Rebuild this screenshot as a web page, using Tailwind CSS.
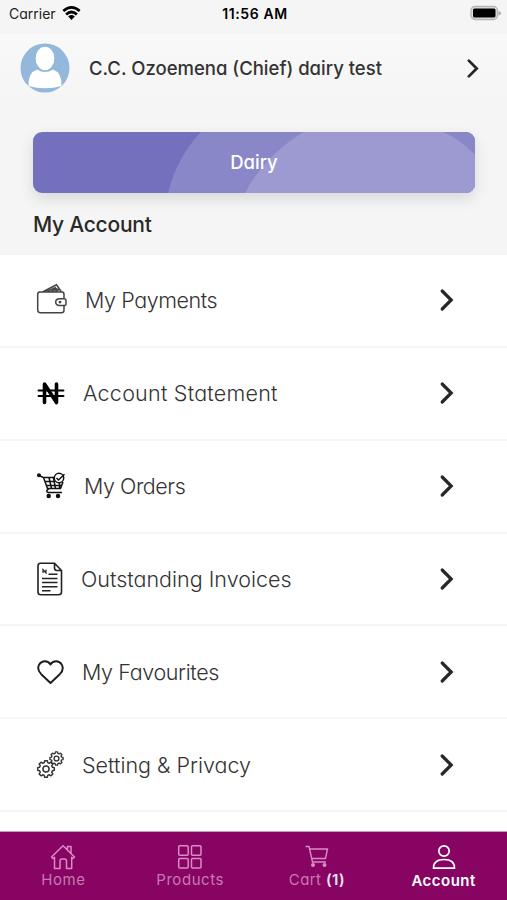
<!DOCTYPE html>
<html lang="en">
<head>
<meta charset="utf-8">
<title>My Account</title>
<script src="https://cdn.jsdelivr.net/npm/@tailwindcss/browser@4"></script>
</head>
<body class="w-[507px] h-[900px] overflow-hidden bg-white text-[#333] font-['Inter','Liberation_Sans',sans-serif] [font-feature-settings:'cv11']">
<svg class="hidden">
  <symbol id="chev" viewBox="0 0 16 24"><path d="M3.200 3 12.200 12 3.200 21" fill="none" stroke="#272727" stroke-width="3.200" stroke-linecap="round"/></symbol>
  <symbol id="gear" viewBox="-9 -9 18 18"><path d="M6.090-1.630 7.900-1.250V1.250L6.090 1.630 5.460 3.150 6.470 4.700 4.700 6.470 3.150 5.460 1.630 6.090 1.250 7.900H-1.250L-1.630 6.090-3.150 5.460-4.700 6.470-6.470 4.700-5.460 3.150-6.090 1.630-7.900 1.250V-1.250L-6.090-1.630-5.460-3.150-6.470-4.700-4.700-6.470-3.150-5.460-1.630-6.090-1.250-7.900H1.250L1.630-6.090 3.150-5.460 4.700-6.470 6.470-4.700 5.460-3.150Z"/><circle r="2.900"/></symbol>
</svg>
<div class="flex flex-col h-[900px]">
  <header class="h-[255px] shrink-0 bg-[#f5f5f5]">
    <div class="h-[34px] grid grid-cols-3 items-center pb-[8px] pl-[9px] pr-[6px] text-black">
      <div class="flex items-center gap-[6px] text-[14px] text-[#222]"><span>Carrier</span>
        <svg class="w-[19px] h-[15px]" viewBox="0 0 19 15"><g fill="none" stroke="#000" stroke-width="2.700"><path d="M1.300 5.100Q9.500-2.200 17.700 5.100"/><path d="M4.100 8.500Q9.500 3.500 14.900 8.500"/></g><path d="M6.200 10.500Q9.500 7.700 12.800 10.500L9.500 14Z"/></svg>
      </div>
      <div class="text-center text-[14px] font-semibold tracking-[0.6px] whitespace-nowrap">11:56 AM</div>
      <div class="flex justify-end"><svg class="w-[31px] h-[16px]" viewBox="0 0 31 16"><rect x="1" y="1.500" width="26.500" height="13" rx="4" fill="#e0e0e0" stroke="#b5b5b5" stroke-width="1.300"/><rect x="3" y="3.500" width="22.500" height="9" rx="1.500"/><path d="M28.500 6Q31 6.500 31 8.300T28.500 10.500Z" fill="#aaa"/></svg></div>
    </div>
    <div class="h-[68px] flex items-center bg-gradient-to-b from-[#f9f9f9] to-[#f5f5f5] pl-[20px] pr-[27px]">
      <svg class="size-[50px]" viewBox="0 0 50 50"><circle cx="25" cy="25" r="24.500" fill="#93b8dc"/><ellipse cx="25" cy="15.700" rx="9.200" ry="11.500" fill="#fff"/><path d="M15.500 20Q25 37 34.500 20L33 27Q25 31 17 27Z" fill="#93b8dc"/><ellipse cx="25" cy="15.200" rx="9.200" ry="11.500" fill="#fff"/><path d="M8.500 43Q8 29.500 17 26.500Q25 31.500 33 26.500Q42 29.500 41.500 43Q25 47.500 8.500 43Z" fill="#fff"/></svg>
      <h1 class="ml-[19px] mt-[2px] text-[18.500px] font-medium whitespace-nowrap flex-1">C.C. Ozoemena (Chief) dairy test</h1>
      <svg class="w-[14px] h-[21px]"><use href="#chev"/></svg>
    </div>
    <div class="pt-[30px] pl-[33px] pr-[32px]">
      <div class="relative h-[61px] w-[442px] rounded-[9px] overflow-hidden bg-[#7370be] shadow-[0_6px_14px_rgba(60,75,75,0.16)] flex items-center justify-center">
        <svg class="absolute inset-0 w-full h-full" viewBox="0 0 442 61"><path d="M135 61Q144 25 168 0H442V61Z" fill="#8987c7"/><path d="M212 61Q233 22 271 0H410Q427 7 442 23V61Z" fill="#9d9ad1"/></svg>
        <span class="relative text-[18.500px] font-medium text-white">Dairy</span>
      </div>
      <h2 class="mt-[16px] text-[21px] leading-[32px] font-medium tracking-[-0.25px] text-[#292929]">My Account</h2>
    </div>
  </header>
  <main class="flex-1 overflow-hidden text-[21.500px] font-[350]">
    <div class="h-[92.850px] flex items-center border-b-2 border-[#f5f5f5] pl-[36px] pr-[52px]">
      <svg class="w-[49px] h-[34px]" viewBox="0 0 49 34" fill="none" stroke="#444" stroke-width="1.500"><path d="M28 15.500V11.500Q28 9 26 9H4Q1.700 9 1.700 11.500V27Q1.700 29.700 4.500 29.700H25.500Q28 29.700 28 27.200V22.500M6.500 9 20.500 1.800 25.500 9M11 8.500 20 4.500M15 8.700 21.500 5.500M19 8.700 23 6.500"/><path d="M28 15.700H23.500Q19.700 15.700 19.700 19.100T23.500 22.500H28.500Q30 22.500 30 21V17.500Q30 15.700 28 15.700Z"/><circle cx="24" cy="19.100" r=".7"/></svg>
      <span class="flex-1 whitespace-nowrap tracking-[-0.42px]">My Payments</span><svg class="w-[16px] h-[24px]"><use href="#chev"/></svg>
    </div>
    <div class="h-[92.850px] flex items-center border-b-2 border-[#f5f5f5] pl-[36px] pr-[52px]">
      <svg class="w-[47px] h-[30px]" viewBox="0 0 47 30" fill="none" stroke="#000" stroke-linecap="round"><path d="M8.500 24.500V6L20.500 24.500V6" stroke-width="3.600" stroke-linejoin="round"/><path d="M2.500 12.500H27.500M2.500 18H27.500" stroke-width="1.900"/></svg>
      <span class="flex-1 whitespace-nowrap tracking-[0.24px]">Account Statement</span><svg class="w-[16px] h-[24px]"><use href="#chev"/></svg>
    </div>
    <div class="h-[92.850px] flex items-center border-b-2 border-[#f5f5f5] pl-[36px] pr-[52px]">
      <svg class="w-[48px] h-[30px]" viewBox="0 0 48 30" fill="none" stroke="#111" stroke-width="1.500"><path d="M3 4.500 7.500 6.500 11.500 17.500H24.500L27 11M7.500 6.500H18M9 10.500H19M10.500 14.500H26M13 6.500 15.500 17.500M17.500 7 19.500 17.500M23.500 12V17.500M13 17.500Q9 20 12 21.500H26"/><circle cx="23" cy="7" r="4.700"/><path d="m20.500 7 2 2 6-5.700"/><circle cx="3" cy="4.300" r="1.300" fill="#111"/><circle cx="12.700" cy="25" r="1.500" fill="#111"/><circle cx="22" cy="25" r="1.500" fill="#111"/></svg>
      <span class="flex-1 whitespace-nowrap tracking-[-0.45px]">My Orders</span><svg class="w-[16px] h-[24px]"><use href="#chev"/></svg>
    </div>
    <div class="h-[92.850px] flex items-center border-b-2 border-[#f5f5f5] pl-[36px] pr-[52px]">
      <svg class="w-[45px] h-[36px]" viewBox="0 0 45 36" fill="none" stroke="#222" stroke-width="1.600"><path d="M4.500 2.200H18.500L25.500 9.500V31Q25.500 33.800 22.500 33.800H5Q2 33.800 2 31V5Q2 2.200 4.500 2.200ZM18.500 2.200V7Q18.500 9.500 21 9.500H25.500"/><path d="M12.500 13.300H21.500M6 17.500H21.500M6 21.600H21.500M6 25.700H21.500M6 29.700H14.500" stroke-width="1.500"/><path d="M7 12V8.500L10 12V8.500" stroke-width="1.200"/></svg>
      <span class="flex-1 whitespace-nowrap">Outstanding Invoices</span><svg class="w-[16px] h-[24px]"><use href="#chev"/></svg>
    </div>
    <div class="h-[92.850px] flex items-center border-b-2 border-[#f5f5f5] pl-[36px] pr-[52px]">
      <svg class="w-[46px] h-[30px]" viewBox="0 0 46 30" fill="none" stroke="#1c1c1c" stroke-width="1.900" stroke-linejoin="round"><path d="M14.500 26 5.200 17.200Q.5 12.500 3.200 7.400C6 3.100 12 3.200 14.500 7.500C17 3.200 23 3.100 25.700 7.400Q28.500 12.500 23.800 17.200Z"/></svg>
      <span class="flex-1 whitespace-nowrap tracking-[-0.38px]">My Favourites</span><svg class="w-[16px] h-[24px]"><use href="#chev"/></svg>
    </div>
    <div class="h-[92.850px] flex items-center border-b-2 border-[#f5f5f5] pl-[36px] pr-[52px]">
      <svg class="w-[46px] h-[30px]" viewBox="0 0 46 30" fill="none" stroke="#333" stroke-width="1.400" stroke-linejoin="round"><use href="#gear" x="0.500" y="9.500" width="19" height="19"/><use href="#gear" x="13" y="1" width="15" height="15" stroke-width="1.600"/></svg>
      <span class="flex-1 whitespace-nowrap">Setting &amp; Privacy</span><svg class="w-[16px] h-[24px]"><use href="#chev"/></svg>
    </div>
  </main>
  <nav class="h-[69px] shrink-0 grid grid-cols-4 bg-[#870462] border-t border-[#c79bba] text-[15px] text-[#c879b1] leading-[18px]">
    <div class="flex flex-col items-center pt-[11px]">
      <svg class="w-[28px] h-[28px]" viewBox="0 0 28 28" fill="none" stroke="#d78dc4" stroke-width="1.500" stroke-linejoin="round"><path d="M2.500 14 14 2.700 25.500 14 24 15.500 22.700 14.300V25.500H17.500V18Q17.500 16 15.500 16H13Q11 16 11 18V25.500H5.500V14.300L4 15.500ZM18.500 6.500V3.500H22V10"/></svg><span class="tracking-[0.5px]">Home</span>
    </div>
    <div class="flex flex-col items-center pt-[11px]">
      <svg class="w-[28px] h-[28px]" viewBox="0 0 28 28" fill="none" stroke="#d78dc4" stroke-width="1.500"><rect x="2.700" y="2.700" width="9.500" height="9.500" rx="1"/><rect x="15.500" y="2.700" width="9.500" height="9.500" rx="1"/><rect x="2.700" y="15.500" width="9.500" height="9.500" rx="1"/><rect x="15.500" y="15.500" width="9.500" height="9.500" rx="1"/></svg><span class="tracking-[0.55px]">Products</span>
    </div>
    <div class="flex flex-col items-center pt-[11px]">
      <svg class="w-[28px] h-[28px]" viewBox="0 0 28 28" fill="none" stroke="#d78dc4" stroke-width="1.400"><path d="M2.500 3.500H6L9.500 19H23M7 6H24.500L22.500 15.500H8.500"/><circle cx="10" cy="22" r="1.300" fill="#d78dc4"/><circle cx="21.500" cy="22" r="1.300" fill="#d78dc4"/></svg><span class="tracking-[0.4px]">Cart <b class="font-semibold text-[#fbe7f5]">(1)</b></span>
    </div>
    <div class="flex flex-col items-center pt-[11px]">
      <svg class="w-[28px] h-[28px]" viewBox="0 0 28 28" fill="none" stroke="#fff" stroke-width="1.700" stroke-linejoin="round"><circle cx="14" cy="8" r="5.200"/><path d="M3.500 25.200Q3.500 16.500 14 16.500T24.500 25.200Z"/></svg><b class="font-semibold text-white mt-[1px] tracking-[0.5px]">Account</b>
    </div>
  </nav>
</div>
</body>
</html>
